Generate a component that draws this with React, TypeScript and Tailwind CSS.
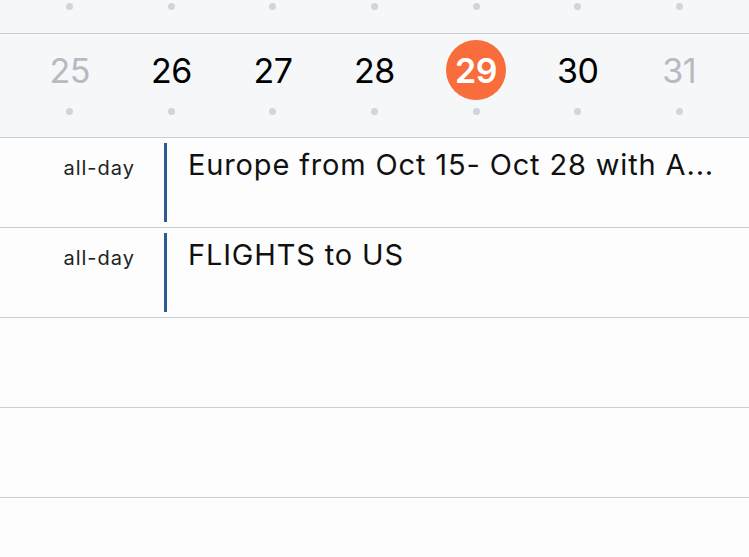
const DAYS = [
  { n: 25, muted: true },
  { n: 26 },
  { n: 27 },
  { n: 28 },
  { n: 29, today: true },
  { n: 30 },
  { n: 31, muted: true },
];

// titles as shown in the list (first one is clipped by the app)
const EVENTS = ["Europe from Oct 15- Oct 28 with A...", "FLIGHTS to US"];

const Dot = () => <span className="block w-[7px] h-[7px] rounded-full bg-[#d0d5dd]" />;

export default function App() {
  return (
    <div className="w-[749px] h-[557px] overflow-hidden bg-[#fdfdfd] font-['Inter',sans-serif] text-[#111]">
      {/* previous week strip */}
      <div className="h-[34px] bg-[#f6f7f9] border-b border-[#c9cdd5] px-[19px] grid grid-cols-7">
        {DAYS.map(d => (
          <div key={d.n} className="flex justify-center pt-[3px]">
            <Dot />
          </div>
        ))}
      </div>

      {/* week row */}
      <div className="h-[104px] bg-[#f6f7f9] border-b border-[#c9cdd5] px-[19px] grid grid-cols-7">
        {DAYS.map(d => (
          <div key={d.n} className="flex flex-col items-center pt-[6px]">
            <div
              className={
                d.today
                  ? "w-[60px] h-[60px] rounded-full bg-[#f86d3b] text-white font-semibold flex items-center justify-center text-[34px] tracking-[-0.5px]"
                  : d.muted
                  ? "w-[60px] h-[60px] flex items-center justify-center text-[34px] text-[#b5bac3] tracking-[-0.5px]"
                  : "w-[60px] h-[60px] flex items-center justify-center text-[34px] text-black tracking-[-0.5px]"
              }
            >
              {d.n}
            </div>
            <div className="mt-[8px]">
              <Dot />
            </div>
          </div>
        ))}
      </div>

      {/* all-day events */}
      {EVENTS.map(e => (
        <div key={e} className="h-[90px] border-b border-[#c9cdd5] flex">
          <div className="w-[135px] text-right text-[20px] tracking-[1px] text-[#222] pt-[15px]">all-day</div>
          <div className="ml-[29px] my-[5px] w-[3px] bg-[#2b5b93]" />
          <div className="flex-1 min-w-0 pl-[21px] pt-[5px] text-[29px] tracking-[0.85px] whitespace-nowrap">{e}</div>
        </div>
      ))}

      <div className="h-[90px] border-b border-[#c9cdd5]" />
      <div className="h-[90px] border-b border-[#c9cdd5]" />
    </div>
  );
}
